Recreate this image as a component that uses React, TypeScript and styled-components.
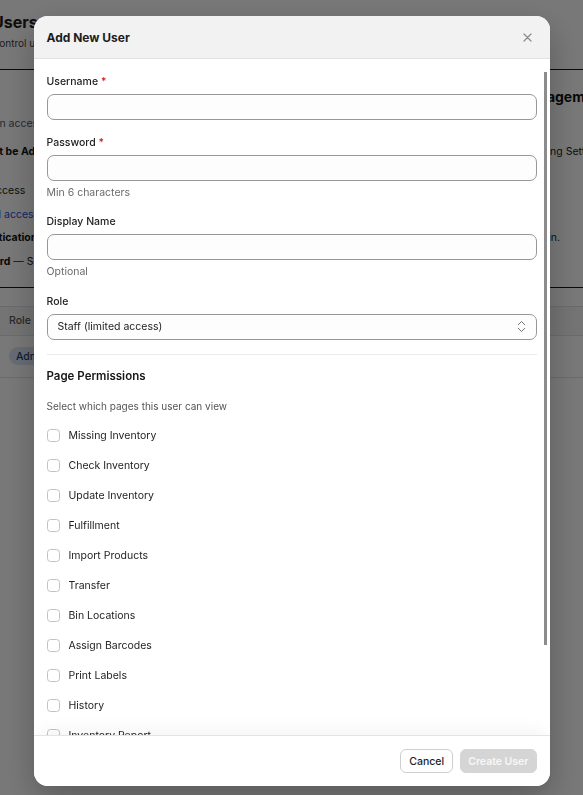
import * as React from 'react'
import styled, { createGlobalStyle } from 'styled-components'
import { ChevronsUpDown } from 'lucide-react'

const GlobalStyle = createGlobalStyle`
  html, body {
    margin: 0;
    padding: 0;
    overflow: hidden;
    background: #fff;
  }
  body {
    font-family: Inter, "Noto Sans", "Liberation Sans", sans-serif;
    color: #1c1c1c;
  }
  * { box-sizing: border-box; }
`

// ---- page behind the dialog ----

const Page = styled.div`
  width: 720px;
  margin-left: -40px;
`

const PageHeader = styled.header`
  height: 70px;
  padding: 11px 0 0 32px;
  border-bottom: 1px solid #161616;
`

const PageTitle = styled.h1`
  margin: 0;
  font-size: 16px;
  line-height: 22px;
  font-weight: 700;
`

const PageSub = styled.p`
  margin: 3px 0 0;
  font-size: 10px;
  line-height: 14px;
  color: #444;
`

const InfoSection = styled.section`
  padding: 17px 0;
  border-bottom: 1px solid #161616;
`

const InfoRow = styled.div<{ $top: number; $tall?: boolean }>`
  display: grid;
  grid-template-columns: 555px 1fr;
  margin-top: ${p => p.$top}px;
  line-height: ${p => (p.$tall ? 20 : 16)}px;
  font-size: 10.5px;
  white-space: nowrap;
`

type Tone = 'plain' | 'muted' | 'bold' | 'link' | 'heading'

const toneCss: Record<Tone, string> = {
  plain: 'color: #222;',
  muted: 'color: #4a5a70;',
  bold: 'color: #111; font-weight: 700;',
  link: 'color: #1d4ed8;',
  heading: 'color: #111; font-weight: 700; font-size: 14px;',
}

const InfoText = styled.span<{ $shift?: number; $tone?: Tone }>`
  margin-left: ${p => p.$shift || 0}px;
  ${p => toneCss[p.$tone || 'plain']}
`

const Strong = styled.b`
  font-weight: 700;
  color: #111;
`

const Table = styled.div`
  margin-top: 18px;
`

const TableHead = styled.div`
  height: 30px;
  display: flex;
  align-items: center;
  padding-left: 49px;
  background: #f6f6f6;
  border-top: 1px solid #e2e2e2;
  border-bottom: 1px solid #e2e2e2;
  font-size: 10.5px;
  font-weight: 500;
  color: #555;
`

const HeadCell = styled.div<{ $w: number }>`
  width: ${p => p.$w}px;
`

const TableRow = styled.div`
  height: 42px;
  display: flex;
  align-items: center;
  padding-left: 49px;
  border-bottom: 1px solid #e2e2e2;
`

const Badge = styled.span`
  display: inline-flex;
  align-items: center;
  height: 18px;
  padding: 0 7px;
  border-radius: 9px;
  background: #dbe6f6;
  color: #1e3f78;
  font-size: 10.5px;
  font-weight: 500;
`

// ---- dialog ----

const Overlay = styled.div`
  position: fixed;
  inset: 0;
  background: rgba(0, 0, 0, 0.53);
  display: flex;
  justify-content: center;
  align-items: flex-start;
  padding-top: 16px;
`

const Modal = styled.div`
  position: relative;
  width: 516px;
  height: 770px;
  background: #fff;
  border-radius: 14px;
  overflow: hidden;
  display: flex;
  flex-direction: column;
  box-shadow: 0 12px 32px rgba(0, 0, 0, 0.25);
`

const ModalHeader = styled.div`
  height: 43px;
  flex: none;
  display: flex;
  align-items: center;
  justify-content: space-between;
  padding: 0 14px 0 13px;
  background: #f2f2f2;
  border-bottom: 1px solid #e2e2e2;
`

const ModalTitle = styled.h2`
  margin: 0;
  font-size: 12px;
  font-weight: 700;
  color: #1d1d1d;
`

const CloseButton = styled.button`
  width: 16px;
  height: 16px;
  padding: 0;
  border: none;
  background: transparent;
  display: flex;
  align-items: center;
  justify-content: center;
  color: #8a8a8a;
  cursor: pointer;
`

const ModalBody = styled.div`
  flex: 1;
  overflow-y: auto;
  padding: 16px 13px 22px 13px;
  scrollbar-width: none;

  &::-webkit-scrollbar {
    display: none;
  }
`

// the page's thin scrollbar thumb, drawn over the body's right edge
const ScrollThumb = styled.div`
  position: absolute;
  top: 56px;
  right: 3px;
  width: 2.5px;
  height: 573px;
  background: #8c8c8c;
  pointer-events: none;
`

const Field = styled.div`
  margin-bottom: 15.5px;
`

const FieldLabel = styled.label`
  display: block;
  margin-bottom: 5px;
  font-size: 10.5px;
  line-height: 14px;
  font-weight: 500;
  color: #222;
`

const Required = styled.span`
  color: #c81e1e;
`

const TextInput = styled.input`
  display: block;
  width: 100%;
  height: 26px;
  padding: 0 10px;
  border: 1px solid #979797;
  border-radius: 7px;
  background: #fdfdfd;
  font: inherit;
  font-size: 10.5px;
  outline: none;
`

const Hint = styled.div`
  margin-top: 5px;
  font-size: 10.5px;
  line-height: 14px;
  color: #6b6b6b;
`

const SelectBox = styled.button`
  width: 100%;
  height: 26px;
  display: flex;
  align-items: center;
  justify-content: space-between;
  padding: 0 7px 0 10px;
  border: 1px solid #979797;
  border-radius: 7px;
  background: #fdfdfd;
  font: inherit;
  font-size: 10.5px;
  color: #222;
  cursor: pointer;
`

const Divider = styled.hr`
  margin: 14px 0;
  border: none;
  height: 1px;
  background: #ebebeb;
`

const SectionTitle = styled.h3`
  margin: 0;
  font-size: 11.5px;
  line-height: 14px;
  font-weight: 600;
  color: #161616;
`

const SectionHint = styled.p`
  margin: 16px 0 0;
  font-size: 10px;
  line-height: 14px;
  color: #555;
`

const CheckList = styled.div`
  margin-top: 16px;
  display: flex;
  flex-direction: column;
  gap: 16px;
`

const CheckRow = styled.label`
  display: flex;
  align-items: center;
  gap: 9px;
  height: 14px;
  font-size: 10.5px;
  color: #232323;
  cursor: pointer;
`

const CheckBox = styled.span`
  width: 13px;
  height: 13px;
  flex: none;
  border: 1px solid #c2c2c2;
  border-radius: 3.5px;
  background: #fff;
`

const ModalFooter = styled.div`
  position: relative;
  height: 51px;
  flex: none;
  display: flex;
  align-items: center;
  justify-content: flex-end;
  gap: 7px;
  padding: 0 13px;
  background: #fff;
  border-top: 1px solid #e4e4e4;
  box-shadow: 0 -10px 18px -6px rgba(0, 0, 0, 0.05);
`

const Button = styled.button<{ $primary?: boolean }>`
  height: 24px;
  padding: 0 ${p => (p.$primary ? 7 : 8)}px;
  border-radius: 6px;
  font: inherit;
  font-size: 10.5px;
  font-weight: ${p => (p.$primary ? 600 : 500)};
  border: 1px solid ${p => (p.$primary ? '#d5d5d5' : '#cfcfcf')};
  background: ${p => (p.$primary ? '#d5d5d5' : '#fff')};
  color: ${p => (p.$primary ? '#f7f7f7' : '#1d1d1d')};
  cursor: pointer;
`

const pages = [
    'Missing Inventory',
    'Check Inventory',
    'Update Inventory',
    'Fulfillment',
    'Import Products',
    'Transfer',
    'Bin Locations',
    'Assign Barcodes',
    'Print Labels',
    'History',
    'Inventory Report',
    'Sales Report',
    'Settings',
]

function BackgroundPage() {
    return (
        <Page>
            <PageHeader>
                <PageTitle>Users</PageTitle>
                <PageSub>Control user accounts and what each person can open</PageSub>
            </PageHeader>
            <InfoSection>
                <InfoRow $top={0} $tall>
                    <span />
                    <InfoText $shift={2} $tone="heading">Management</InfoText>
                </InfoRow>
                <InfoRow $top={9}>
                    <InfoText $shift={14} $tone="muted">Admin access to every page of the app</InfoText>
                </InfoRow>
                <InfoRow $top={12}>
                    <InfoText $shift={17} $tone="bold">Must be Admin to manage users</InfoText>
                    <InfoText $shift={18}>Billing Settings</InfoText>
                </InfoRow>
                <InfoRow $top={23}>
                    <InfoText $shift={13}>No access</InfoText>
                </InfoRow>
                <InfoRow $top={7.5}>
                    <InfoText $shift={10} $tone="link">Partial access by page</InfoText>
                </InfoRow>
                <InfoRow $top={7.5}>
                    <InfoText $shift={1} $tone="bold">Authentication required</InfoText>
                    <InfoText $shift={18}>login.</InfoText>
                </InfoRow>
                <InfoRow $top={7.5}>
                    <InfoText><Strong>Password</Strong> — Set by an admin</InfoText>
                </InfoRow>
            </InfoSection>
            <Table>
                <TableHead>
                    <HeadCell $w={140}>Role</HeadCell>
                    <HeadCell $w={160}>Username</HeadCell>
                    <HeadCell $w={160}>Pages</HeadCell>
                </TableHead>
                <TableRow>
                    <Badge>Admin</Badge>
                </TableRow>
            </Table>
        </Page>
    )
}

function CloseIcon() {
    return (
        <svg width="9" height="9" viewBox="0 0 9 9" fill="none" stroke="currentColor" strokeWidth="1.2" strokeLinecap="round">
            <path d="M1 1l7 7M8 1L1 8" />
        </svg>
    )
}

function AddUserModal() {
    return (
        <Overlay>
            <Modal>
                <ModalHeader>
                    <ModalTitle>Add New User</ModalTitle>
                    <CloseButton aria-label="Close"><CloseIcon /></CloseButton>
                </ModalHeader>

                <ModalBody>
                    <Field>
                        <FieldLabel>Username <Required>*</Required></FieldLabel>
                        <TextInput type="text" />
                    </Field>
                    <Field>
                        <FieldLabel>Password <Required>*</Required></FieldLabel>
                        <TextInput type="password" />
                        <Hint>Min 6 characters</Hint>
                    </Field>
                    <Field>
                        <FieldLabel>Display Name</FieldLabel>
                        <TextInput type="text" />
                        <Hint>Optional</Hint>
                    </Field>
                    <div>
                        <FieldLabel>Role</FieldLabel>
                        <SelectBox type="button">
                            <span>Staff (limited access)</span>
                            <ChevronsUpDown size={15} strokeWidth={1.5} color="#666" />
                        </SelectBox>
                    </div>

                    <Divider />

                    <SectionTitle>Page Permissions</SectionTitle>
                    <SectionHint>Select which pages this user can view</SectionHint>
                    <CheckList>
                        {pages.map(name => (
                            <CheckRow key={name}>
                                <CheckBox />
                                {name}
                            </CheckRow>
                        ))}
                    </CheckList>
                </ModalBody>
                <ScrollThumb />

                <ModalFooter>
                    <Button type="button">Cancel</Button>
                    <Button type="button" $primary>Create User</Button>
                </ModalFooter>
            </Modal>
        </Overlay>
    )
}

export default function App() {
    return (
        <>
            <GlobalStyle />
            <BackgroundPage />
            <AddUserModal />
        </>
    )
}
